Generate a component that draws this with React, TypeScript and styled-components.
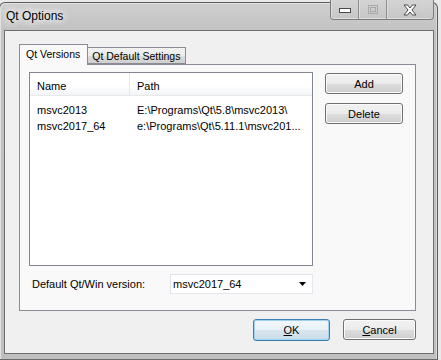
import React from "react";
import styled, { createGlobalStyle } from "styled-components";

const Global = createGlobalStyle`
  html, body { margin: 0; padding: 0; background: #e9e9e9; overflow: hidden; }
  body { font-family: "Liberation Sans", Arial, sans-serif; font-size: 11px; color: #000; }
  * { box-sizing: border-box; }
`;

const Window = styled.div`
  margin: 2px 0 0 -1px;
  width: 439px;
  height: 358px;
  border: 1px solid #5c5c5c;
  border-bottom-color: #6a6a6a;
  border-radius: 6px 6px 0 0;
  background: linear-gradient(180deg, #cfcfcf 0px, #c2c2c2 28px, #bfbfbf 100%);
  box-shadow: inset 1px 1px 0 #e2e2e2, inset -1px 0 0 #dadada;
  padding: 0 3px 5px 4px;
  display: flex;
  flex-direction: column;
`;

const TitleBar = styled.div`
  height: 27px;
  display: flex;
  justify-content: space-between;
  align-items: flex-start;
`;

const Title = styled.div`
  font-family: "Liberation Sans", Arial, sans-serif;
  font-size: 12px;
  color: #000;
  padding: 6px 0 0 2px;
  text-shadow: 0 0 6px #f2f2f2, 0 0 8px #f2f2f2, 0 0 10px #efefef;
`;

const Caption = styled.div`
  margin-top: -3px;
  display: flex;
  height: 20px;
  border: 1px solid #7c7c7c;
  border-top: none;
  border-radius: 0 0 4px 4px;
  overflow: hidden;
  background: linear-gradient(180deg, #d4d4d4, #c6c6c6);
  box-shadow: inset 0 -1px 0 #e0e0e0;
`;

const CapBtn = styled.div<{ $w: number; $last?: boolean }>`
  width: ${(p) => p.$w}px;
  height: 100%;
  display: flex;
  align-items: center;
  justify-content: center;
  border-right: ${(p) => (p.$last ? "none" : "1px solid #8e8e8e")};
  box-shadow: inset 1px 0 0 #dedede;
`;

const Client = styled.div`
  flex: 1;
  border: 1px solid #6f6f6f;
  background: #f0f0f0;
  display: flex;
  flex-direction: column;
  padding: 13px 17px 12px 14px;
`;

const TabWidget = styled.div`
  display: flex;
  flex-direction: column;
  width: 397px;
  margin-right: auto;
`;

const TabBar = styled.div`
  display: flex;
  align-items: flex-end;
  height: 20px;
  position: relative;
  z-index: 1;
`;

const Tab = styled.div<{ $active?: boolean }>`
  height: ${(p) => (p.$active ? 21 : 17)}px;
  margin-bottom: ${(p) => (p.$active ? -1 : 0)}px;
  padding: ${(p) => (p.$active ? "3px 7px 0 6px" : "2px 5px 0 4px")};
  border: 1px solid #898c95;
  border-bottom: ${(p) => (p.$active ? "none" : "1px solid #898c95")};
  border-left: ${(p) => (p.$active ? "1px solid #898c95" : "none")};
  background: ${(p) =>
    p.$active ? "#f9f9f9" : "linear-gradient(180deg, #f2f2f2 0%, #ebebeb 50%, #dddddd 51%, #cfcfcf 100%)"};
  white-space: nowrap;
  font-size: 10.5px;
  line-height: 13px;
`;

const Pane = styled.div`
  height: 247px;
  border: 1px solid #898c95;
  background: #f9f9f9;
  padding: 7px 11px 16px 9px;
  display: flex;
  flex-direction: column;
  gap: 7px;
`;

const TopRow = styled.div`
  display: flex;
  gap: 12px;
  flex: 1;
`;

const ListBox = styled.div`
  width: 284px;
  height: 194px;
  border: 1px solid #828790;
  background: #fff;
  display: flex;
  flex-direction: column;
`;

const HeaderRow = styled.div`
  height: 23px;
  display: flex;
  background: linear-gradient(180deg, #ffffff 0%, #ffffff 60%, #f3f4f6 100%);
  border-bottom: 1px solid #e8e9eb;
`;

const HeaderCell = styled.div<{ $w?: number }>`
  width: ${(p) => (p.$w ? `${p.$w}px` : "auto")};
  flex: ${(p) => (p.$w ? "none" : 1)};
  padding: 7px 0 0 7px;
  border-right: ${(p) => (p.$w ? "1px solid #e5e5e5" : "none")};
  color: #000;
`;

const Rows = styled.div`
  padding-top: 6px;
`;

const Row = styled.div`
  display: flex;
  height: 16px;
  align-items: center;
`;

const Cell = styled.div<{ $w?: number }>`
  width: ${(p) => (p.$w ? `${p.$w}px` : "auto")};
  flex: ${(p) => (p.$w ? "none" : 1)};
  padding-left: 7px;
  white-space: nowrap;
  overflow: hidden;
`;

const SideButtons = styled.div`
  display: flex;
  flex-direction: column;
  gap: 9px;
  padding-top: 1px;
`;

const Button = styled.button<{ $w: number; $default?: boolean }>`
  width: ${(p) => p.$w}px;
  height: ${(p) => (p.$default ? 22 : 21)}px;
  font-family: "Liberation Sans", Arial, sans-serif;
  font-size: 11px;
  color: #000;
  border: 1px solid ${(p) => (p.$default ? "#3c7fb1" : "#707070")};
  border-radius: 3px;
  padding: 0;
  background: ${(p) =>
    p.$default
      ? "linear-gradient(180deg, #f2f7fa 0%, #e9f1f6 50%, #d8e6ef 51%, #cbdde9 100%)"
      : "linear-gradient(180deg, #f2f2f2 0%, #ebebeb 50%, #dddddd 51%, #cfcfcf 100%)"};
  box-shadow: inset 0 0 0 1px ${(p) => (p.$default ? "#9ed2f0" : "#fbfbfb")};
  u { text-decoration: underline; }
`;

const ComboRow = styled.div`
  display: flex;
  align-items: center;
  height: 20px;
`;

const ComboLabel = styled.div`
  width: 141px;
  padding-left: 3px;
`;

const Combo = styled.div`
  width: 143px;
  height: 20px;
  border: 1px solid #d9d9d9;
  border-color: #e2e3ea #e3e9ef #e3e9ef #e2e3ea;
  background: #fff;
  display: flex;
  align-items: center;
  justify-content: space-between;
  padding: 0 6px 0 2px;
`;

const Footer = styled.div`
  margin-top: auto;
  display: flex;
  justify-content: flex-end;
  gap: 13px;
`;

export default function App() {
  return (
    <>
      <Global />
      <Window>
        <TitleBar>
          <Title>Qt Options</Title>
          <Caption>
            <CapBtn $w={28}>
              <svg width="12" height="6" viewBox="0 0 12 6">
                <rect x="0.5" y="1.5" width="11" height="4" fill="#fff" stroke="#4a4a4a" />
              </svg>
            </CapBtn>
            <CapBtn $w={28}>
              <svg width="10" height="9" viewBox="0 0 10 9">
                <rect x="0.5" y="0.5" width="9" height="8" fill="none" stroke="#a8a8a8" />
                <rect x="2.5" y="2.5" width="5" height="4" fill="none" stroke="#a8a8a8" />
              </svg>
            </CapBtn>
            <CapBtn $w={46} $last>
              <svg width="14" height="12" viewBox="0 0 14 12">
                <path
                  d="M1 1 H4.5 L7 4 L9.5 1 H13 L9 6 L13 11 H9.5 L7 8 L4.5 11 H1 L5 6 Z"
                  fill="#fff"
                  stroke="#4a4a4a"
                  strokeWidth="1"
                  strokeLinejoin="round"
                />
              </svg>
            </CapBtn>
          </Caption>
        </TitleBar>
        <Client>
          <TabWidget>
            <TabBar>
              <Tab $active>Qt Versions</Tab>
              <Tab>Qt Default Settings</Tab>
            </TabBar>
            <Pane>
              <TopRow>
                <ListBox>
                  <HeaderRow>
                    <HeaderCell $w={100}>Name</HeaderCell>
                    <HeaderCell>Path</HeaderCell>
                  </HeaderRow>
                  <Rows>
                    <Row>
                      <Cell $w={100}>msvc2013</Cell>
                      <Cell>E:\Programs\Qt\5.8\msvc2013\</Cell>
                    </Row>
                    <Row>
                      <Cell $w={100}>msvc2017_64</Cell>
                      <Cell>e:\Programs\Qt\5.11.1\msvc201...</Cell>
                    </Row>
                  </Rows>
                </ListBox>
                <SideButtons>
                  <Button $w={78}>Add</Button>
                  <Button $w={78}>Delete</Button>
                </SideButtons>
              </TopRow>
              <ComboRow>
                <ComboLabel>Default Qt/Win version:</ComboLabel>
                <Combo>
                  <span>msvc2017_64</span>
                  <svg width="7" height="4" viewBox="0 0 7 4">
                    <path d="M0 0 H7 L3.5 4 Z" fill="#000" />
                  </svg>
                </Combo>
              </ComboRow>
            </Pane>
          </TabWidget>
          <Footer>
            <Button $w={77} $default>
              <u>O</u>K
            </Button>
            <Button $w={73}>
              <u>C</u>ancel
            </Button>
          </Footer>
        </Client>
      </Window>
    </>
  );
}
